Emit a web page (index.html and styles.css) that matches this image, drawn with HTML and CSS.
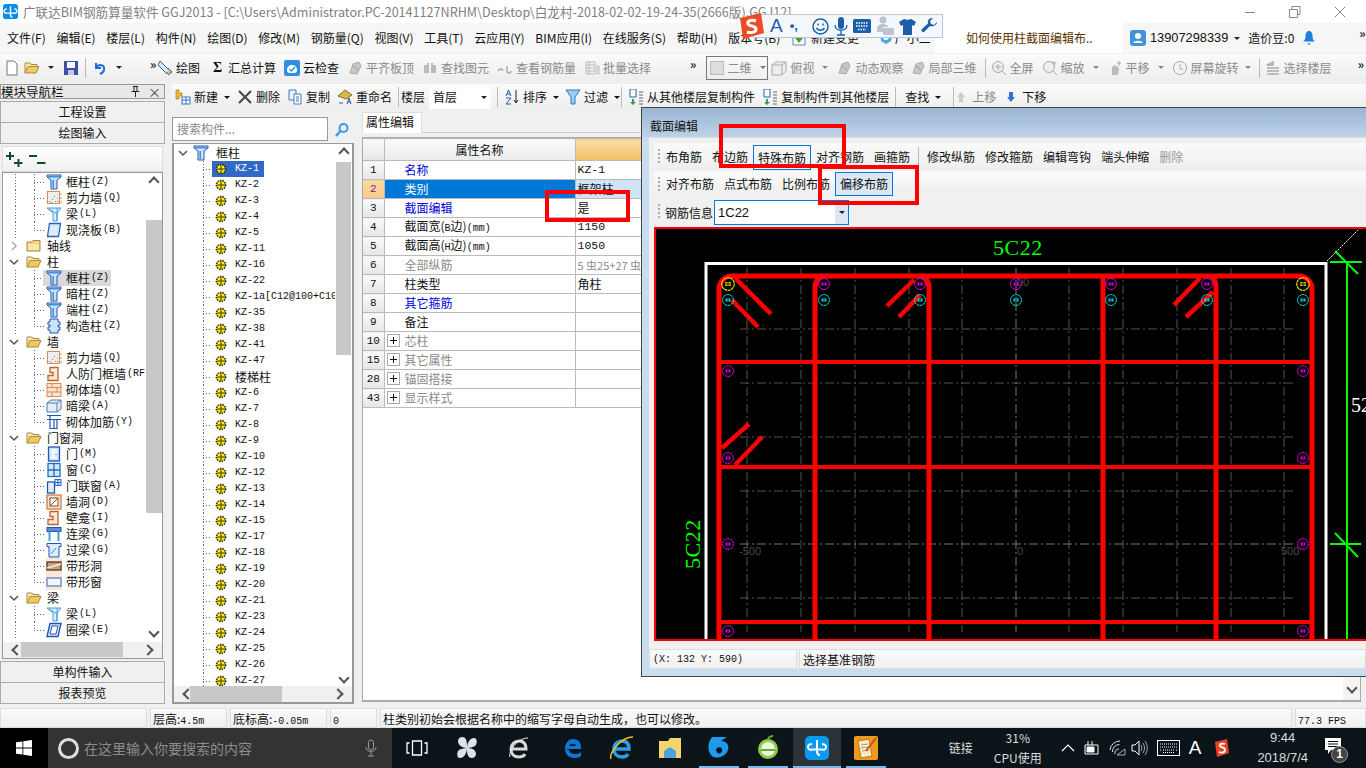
FILE: index.html
```html
<!DOCTYPE html>
<html lang="zh-CN">
<head>
    <meta charset="UTF-8">
    <title>广联达BIM钢筋算量软件 GGJ2013</title>
    <link rel="stylesheet" href="styles.css">
</head>
<body>
<svg class="defs" width="0" height="0">
    <symbol id="col" viewBox="0 0 16 16"><path d="M1 1h14v2l-4 3v9H5V6L1 3z" fill="#cfe3f8" stroke="#1f55b5"/><path d="M2 2h12v1.500H2zM6.500 6h1.500v8H6.500z" fill="#3f8fe0"/></symbol>
    <symbol id="wall" viewBox="0 0 16 16"><rect x="1.500" y="1.500" width="12" height="12" fill="#eee" stroke="#d98a50"/><path d="M3 11h1v1H3zM6 9h1v1H6zM9 11h1v1H9zM11 8h1v1h-1zM8 6h1v1H8zM5 12h1v1H5zM11 11h1v1h-1z" fill="#888"/><path d="M14 4h2M14 8h2M14 12h2" stroke="#d98a50"/></symbol>
    <symbol id="beam" viewBox="0 0 16 16"><path d="M1 2h14l-4 5v8H7V7z" fill="#d8ecfb" stroke="#4a9ae0"/><path d="M11 2v13M3 3l8 5" stroke="#4a9ae0" fill="none"/></symbol>
    <symbol id="slab" viewBox="0 0 16 16"><path d="M3.500 1.500h11l-2 13h-11z" fill="#dcecfb" stroke="#2b62b8" stroke-width="1.300"/></symbol>
    <symbol id="fold" viewBox="0 0 16 16"><path d="M1 4h5l1-1.500h7V13H1z" fill="#f3d67c" stroke="#a98a3c"/><path d="M2 6h11v6H2z" fill="#fbe9a8"/></symbol>
    <symbol id="open" viewBox="0 0 16 16"><path d="M1 13V3h5l1 1.500h6V7" fill="#f6e6b0" stroke="#a98a3c"/><path d="M1 13l3-6.500h11L12 13z" fill="#f2c95c" stroke="#a98a3c"/></symbol>
    <symbol id="gz" viewBox="0 0 16 16"><path d="M4 1h8v3h2v3h-2v2h2v3h-2v3H4v-3H2V9h2V7H2V4h2z" fill="#cfe3f8" stroke="#1f55b5"/></symbol>
    <symbol id="rf" viewBox="0 0 16 16"><path d="M4 1.500h8v13H2v-5h5v-3H4z" fill="#fbe8d6" stroke="#b8652e" stroke-width="1.300"/></symbol>
    <symbol id="brick" viewBox="0 0 16 16"><rect x="1" y="1.500" width="14" height="13" fill="#fbe3cf" stroke="#d98a50"/><path d="M1 5.500h14M1 10h14M6 1.500v4M11 5.500V10M6 10v4.500" stroke="#d98a50"/></symbol>
    <symbol id="ab" viewBox="0 0 16 16"><path d="M1 5l4-3h10v9l-4 3H1z" fill="#e3eef9" stroke="#4d7aa8"/><path d="M1 5h10v9M11 5l4-3" fill="none" stroke="#4d7aa8"/></symbol>
    <symbol id="rein" viewBox="0 0 16 16"><path d="M1 1.500h14M4 1.500v13h7V5M1 5.500h14M8 5.500v9" fill="none" stroke="#1f55b5" stroke-width="1.200"/></symbol>
    <symbol id="door" viewBox="0 0 16 16"><rect x="2.500" y="1" width="11" height="14" fill="#cfe3f8" stroke="#1f55b5" stroke-width="1.300"/><rect x="5" y="3" width="6" height="10" fill="#eef6fd"/><path d="M9.500 8h1v1h-1z" fill="#1f55b5"/></symbol>
    <symbol id="win" viewBox="0 0 16 16"><rect x="2" y="1.500" width="12" height="13" fill="#d5e8fa" stroke="#1f6ec5" stroke-width="1.300"/><path d="M8 1.500v13M2 8h12" stroke="#1f6ec5" stroke-width="1.300"/></symbol>
    <symbol id="dw" viewBox="0 0 16 16"><rect x="1.500" y="4" width="7" height="11" fill="#e3eef9" stroke="#1f55b5" stroke-width="1.300"/><rect x="9" y="1.500" width="6" height="6" fill="#d5e8fa" stroke="#1f6ec5"/><path d="M12 1.500v6M9 4.500h6" stroke="#1f6ec5"/></symbol>
    <symbol id="hole" viewBox="0 0 16 16"><rect x="1" y="1" width="14" height="14" fill="#fbe3cf" stroke="#c8733a" stroke-width="1.200"/><rect x="4" y="4" width="8" height="8" fill="#fff" stroke="#8a4a20"/><path d="M4 12l8-8" stroke="#8a4a20"/></symbol>
    <symbol id="lb" viewBox="0 0 16 16"><rect x="1" y="1.500" width="14" height="4" fill="#5a8fd8" stroke="#1f55b5"/><path d="M3.500 5.500V15M12.500 5.500V15" stroke="#4a9ae0" stroke-width="2"/></symbol>
    <symbol id="gl" viewBox="0 0 16 16"><path d="M1 1.500h14v3H13V15H3V4.500H1z" fill="#dcecfb" stroke="#1f55b5"/><path d="M5 12l5-6" stroke="#3f8fe0"/></symbol>
    <symbol id="dh" viewBox="0 0 16 16"><rect x="0" y="0" width="16" height="16" fill="#fbe6da"/><rect x="1" y="4" width="14" height="8" fill="#c7a080" stroke="#5e3313" stroke-width="1.300"/><path d="M1 10l14-4" stroke="#f5ece4" stroke-width="1.500"/></symbol>
    <symbol id="dc" viewBox="0 0 16 16"><rect x="0" y="0" width="16" height="16" fill="#fbe6da"/><rect x="1" y="4" width="14" height="8" fill="#eef5fc" stroke="#5e86c8" stroke-width="1.300"/></symbol>
    <symbol id="ql" viewBox="0 0 16 16"><path d="M4 1.500h11l-3 13H1z" fill="#dcecfb" stroke="#1f55b5" stroke-width="1.400"/><path d="M6 4h6l-2 8H4z" fill="#fff" stroke="#1f55b5"/></symbol>
    <symbol id="bar" viewBox="0 0 12 12"><circle cx="6" cy="6" r="4.600" fill="#ffee00" stroke="#222" stroke-width="1.500" stroke-dasharray="1.500 1"/><path d="M2 6h8M6 2v8" stroke="#333"/></symbol>
    <symbol id="dot" viewBox="0 0 18 18"><circle cx="9" cy="9" r="7.500" fill="none" stroke="currentColor" stroke-width="1.300" stroke-dasharray="3.500 .6"/><path d="M5.500 7h3v1.500h-3zM9.500 7h3v1.500h-3zM5.500 9.500h3V11h-3zM9.500 9.500h3V11h-3z" fill="currentColor"/></symbol>
    <symbol id="gray" viewBox="0 0 16 16"><path d="M3 13l3-9 6-2 2 4-4 8z" fill="#c8c8c8" stroke="#aaa"/><path d="M6 6l5 4" stroke="#999"/></symbol>
</svg>

<div class="titlebar">
    <svg class="logo" viewBox="0 0 16 16"><rect width="16" height="16" rx="3" fill="#0a8fe8"/><path d="M8 2.500v9M4 5.500a2.200 2.200 0 1 0 0 4.200h8a2.200 2.200 0 1 0 0-4.200M8 11.500c0 2 1 2.500 2 2.500" fill="none" stroke="#fff" stroke-width="1.500"/></svg>
    <span class="title-text">广联达BIM钢筋算量软件 GGJ2013 - [C:\Users\Administrator.PC-20141127NRHM\Desktop\白龙村-2018-02-02-19-24-35(2666版).GGJ12]</span>
    <div class="winbtns">
        <svg width="12" height="12"><path d="M1 6.500h10" stroke="#888"/></svg>
        <svg width="12" height="12"><path d="M.5 3.500h8v8h-8zM3 3.500V.5h8v8H8.500" fill="none" stroke="#888"/></svg>
        <svg width="12" height="12"><path d="M1 1l10 10M11 1L1 11" stroke="#888"/></svg>
    </div>
</div>

<div class="menubar">
    <span>文件(F)</span><span>编辑(E)</span><span>楼层(L)</span><span>构件(N)</span><span>绘图(D)</span><span>修改(M)</span><span>钢筋量(Q)</span><span>视图(V)</span><span>工具(T)</span><span>云应用(Y)</span><span>BIM应用(I)</span><span>在线服务(S)</span><span>帮助(H)</span><span class="m-ver">版本号(B)</span>
    <div class="m-link"><svg class="ic" viewBox="0 0 16 16"><path d="M2 1h9l3 3v11H2z" fill="#fff" stroke="#5a8ac0"/><path d="M8 4l4 4-4 5-4-5z" fill="#4aa02c"/></svg><span>新建变更</span></div>
    <div class="m-link"><svg class="ic" viewBox="0 0 16 16"><path d="M2 3h12l-1 8-5 3-5-3z" fill="#4aa8e8"/><circle cx="8" cy="7" r="3" fill="#fff"/></svg><span>广小二</span></div>
    <div class="m-ask">如何使用柱截面编辑布..</div>
    <div class="m-user">
        <svg class="ic" viewBox="0 0 16 16"><rect width="16" height="16" rx="3" fill="#3f93d8"/><circle cx="8" cy="6" r="3" fill="#fff"/><path d="M3 13c1-3 9-3 10 0z" fill="#fff"/></svg>
        <span class="u-phone">13907298339</span>
        <span class="arrow"></span>
        <span class="u-bean">造价豆:0</span>
        <svg class="u-bell" viewBox="0 0 16 18"><path d="M8 1c3 0 4 3 4 6 0 3 1 5 3 6H1c2-1 3-3 3-6 0-3 1-6 4-6z" fill="#1d7fe0"/><path d="M6 15h4l-2 2z" fill="#1d7fe0"/></svg>
        <span class="chev">»</span>
    </div>
</div>

<div class="toolbar">
    <div class="tb-left">
        <svg class="ic" viewBox="0 0 16 16"><path d="M3 1h7l3 3v11H3z" fill="#fff" stroke="#777"/></svg>
        <svg class="ic" viewBox="0 0 16 16"><use href="#open"/></svg><span class="arrow"></span>
        <svg class="ic" viewBox="0 0 16 16"><rect x="1" y="1" width="14" height="14" fill="#3d4fa8"/><rect x="4" y="2" width="8" height="6" fill="#fff"/><rect x="5" y="10" width="6" height="5" fill="#c8c8d8"/></svg>
        <i class="sep"></i>
        <svg class="ic" viewBox="0 0 16 16"><path d="M4 3v5h5" fill="none" stroke="#1e6fd0" stroke-width="2"/><path d="M4 8c3-5 9-3 8 2-.3 2-2 3-4 4" fill="none" stroke="#1e6fd0" stroke-width="2"/></svg><span class="arrow"></span>
        <span class="chev">»</span>
    </div>
    <div class="tool t-first"><svg class="ic" viewBox="0 0 16 16"><path d="M3 1l9 9-2 4-9-9z" fill="#d9e6f5" stroke="#2d5fa8"/><path d="M11 8l4 4-4 3" fill="#f0c040" stroke="#2d5fa8"/></svg>绘图</div>
    <div class="tool t-sum"><span class="sigma">Σ</span>汇总计算</div>
    <div class="tool"><svg class="ic" viewBox="0 0 16 16"><rect width="16" height="16" rx="2" fill="#2f8ee0"/><path d="M3 10c0-3 2-5 5-5s5 2 5 5-2 3-5 3-5 0-5-3z" fill="#fff"/><path d="M5.500 9l2 2 3.500-4" fill="none" stroke="#2f8ee0" stroke-width="1.300"/></svg>云检查</div>
    <div class="tool off"><svg class="ic"><use href="#gray"/></svg>平齐板顶</div>
    <div class="tool off"><svg class="ic" viewBox="0 0 16 16"><path d="M2 5h5v8H2zM9 5h5v8H9zM5 3h2v2H5zM9 3h2v2H9z" fill="#bbb"/></svg>查找图元</div>
    <div class="tool off"><svg class="ic" viewBox="0 0 16 16"><path d="M1 11c2-3 4-3 5 0M10 6v5a2 2 0 0 0 4 0" fill="none" stroke="#aaa" stroke-width="1.500"/></svg>查看钢筋量</div>
    <div class="tool off"><svg class="ic" viewBox="0 0 16 16"><path d="M2 2h9v12H2zM2 5h9M2 8h9M2 11h9M5 2v12M13 6h2v8h-2z" fill="none" stroke="#bbb"/></svg>批量选择</div>
    <span class="chev c-mid">»</span>
    <div class="combo2"><span class="sq"></span>二维<span class="arrow"></span></div>
    <div class="tool off t-view"><svg class="ic" viewBox="0 0 16 16"><path d="M1 5l4-3h10v9l-4 4H1z" fill="#eee" stroke="#aaa"/><path d="M1 5h10v10M11 5l4-3" fill="none" stroke="#aaa"/></svg>俯视<span class="arrow a-gap"></span></div>
    <div class="tool off"><svg class="ic"><use href="#gray"/></svg>动态观察</div>
    <div class="tool off t-tight"><svg class="ic"><use href="#gray"/></svg>局部三维</div>
    <i class="sep s-tall"></i>
    <div class="tool off"><svg class="ic" viewBox="0 0 16 16"><circle cx="7" cy="7" r="5.500" fill="#eee" stroke="#aaa"/><path d="M4 7h6M7 4v6M11 11l4 4" stroke="#aaa"/></svg>全屏</div>
    <div class="tool off"><svg class="ic" viewBox="0 0 16 16"><circle cx="7" cy="7" r="5.500" fill="#eee" stroke="#aaa"/><path d="M11 11l4 4M12 1v4M14 3h-4" stroke="#aaa"/></svg>缩放<span class="arrow a-gap"></span></div>
    <div class="tool off"><svg class="ic" viewBox="0 0 16 16"><path d="M5 15V7l3-2 4 3-1 7z" fill="#bbb"/><path d="M12 1v5M10 3h4" stroke="#aaa"/></svg>平移<span class="arrow a-gap"></span></div>
    <div class="tool off"><svg class="ic" viewBox="0 0 16 16"><circle cx="8" cy="8" r="6.500" fill="#f4f4f4" stroke="#aaa"/><path d="M8 4v5h3" fill="none" stroke="#aaa"/></svg>屏幕旋转<span class="arrow"></span></div>
    <i class="sep s-tall"></i>
    <div class="tool off"><svg class="ic" viewBox="0 0 16 16"><path d="M2 5l6-3v3zM2 8h12M2 11h12M2 14h12" fill="none" stroke="#aaa" stroke-width="1.400"/></svg>选择楼层</div>
    <span class="chev c-end">»</span>
</div>

<div class="main">
    <!-- 模块导航栏 -->
    <div class="nav">
        <div class="nav-head"><span>模块导航栏</span><svg class="nav-pin" width="9" height="11" viewBox="0 0 9 11"><path d="M2 .5h5M3 .5v5M6 .5v5M.5 5.500h8M4.500 6v5" fill="none" stroke="#222"/></svg><span class="nav-x">×</span></div>
        <div class="nav-btn nb-first">工程设置</div>
        <div class="nav-btn">绘图输入</div>
        <div class="nav-tool">
            <svg width="17" height="15" viewBox="0 0 17 15"><path d="M0 4h8M4 0v8M8 11h8.500M12.500 7v8" stroke="#114d24" stroke-width="2"/></svg>
            <svg width="17" height="15" viewBox="0 0 17 15"><path d="M0 4h8M8 11h8.500" stroke="#114d24" stroke-width="2"/></svg>
        </div>
        <div class="nav-tree">
            <div class="nav-list">
                <div class="row kid"><div class="item"><svg class="ic"><use href="#col"/></svg>框柱<span class="lat">(Z)</span></div></div>
                <div class="row kid"><div class="item"><svg class="ic"><use href="#wall"/></svg>剪力墙<span class="lat">(Q)</span></div></div>
                <div class="row kid"><div class="item"><svg class="ic"><use href="#beam"/></svg>梁<span class="lat">(L)</span></div></div>
                <div class="row kid last"><div class="item"><svg class="ic"><use href="#slab"/></svg>现浇板<span class="lat">(B)</span></div></div>
                <div class="row group"><svg class="gt" viewBox="0 0 10 10"><path d="M3 1l4 4-4 4" fill="none" stroke="#aaa" stroke-width="1.500"/></svg><svg class="ic"><use href="#fold"/></svg>轴线</div>
                <div class="row group"><svg class="gt" viewBox="0 0 10 10"><path d="M1 3l4 4 4-4" fill="none" stroke="#555" stroke-width="1.500"/></svg><svg class="ic"><use href="#open"/></svg>柱</div>
                <div class="row kid"><div class="item picked"><svg class="ic"><use href="#col"/></svg>框柱<span class="lat">(Z)</span></div></div>
                <div class="row kid"><div class="item"><svg class="ic"><use href="#col"/></svg>暗柱<span class="lat">(Z)</span></div></div>
                <div class="row kid"><div class="item"><svg class="ic"><use href="#col"/></svg>端柱<span class="lat">(Z)</span></div></div>
                <div class="row kid last"><div class="item"><svg class="ic"><use href="#gz"/></svg>构造柱<span class="lat">(Z)</span></div></div>
                <div class="row group"><svg class="gt" viewBox="0 0 10 10"><path d="M1 3l4 4 4-4" fill="none" stroke="#555" stroke-width="1.500"/></svg><svg class="ic"><use href="#open"/></svg>墙</div>
                <div class="row kid"><div class="item"><svg class="ic"><use href="#wall"/></svg>剪力墙<span class="lat">(Q)</span></div></div>
                <div class="row kid"><div class="item"><svg class="ic"><use href="#rf"/></svg>人防门框墙<span class="lat">(RF</span></div></div>
                <div class="row kid"><div class="item"><svg class="ic"><use href="#brick"/></svg>砌体墙<span class="lat">(Q)</span></div></div>
                <div class="row kid"><div class="item"><svg class="ic"><use href="#ab"/></svg>暗梁<span class="lat">(A)</span></div></div>
                <div class="row kid last"><div class="item"><svg class="ic"><use href="#rein"/></svg>砌体加筋<span class="lat">(Y)</span></div></div>
                <div class="row group"><svg class="gt" viewBox="0 0 10 10"><path d="M1 3l4 4 4-4" fill="none" stroke="#555" stroke-width="1.500"/></svg><svg class="ic"><use href="#open"/></svg>门窗洞</div>
                <div class="row kid"><div class="item"><svg class="ic"><use href="#door"/></svg>门<span class="lat">(M)</span></div></div>
                <div class="row kid"><div class="item"><svg class="ic"><use href="#win"/></svg>窗<span class="lat">(C)</span></div></div>
                <div class="row kid"><div class="item"><svg class="ic"><use href="#dw"/></svg>门联窗<span class="lat">(A)</span></div></div>
                <div class="row kid"><div class="item"><svg class="ic"><use href="#hole"/></svg>墙洞<span class="lat">(D)</span></div></div>
                <div class="row kid"><div class="item"><svg class="ic"><use href="#rf"/></svg>壁龛<span class="lat">(I)</span></div></div>
                <div class="row kid"><div class="item"><svg class="ic"><use href="#lb"/></svg>连梁<span class="lat">(G)</span></div></div>
                <div class="row kid"><div class="item"><svg class="ic"><use href="#gl"/></svg>过梁<span class="lat">(G)</span></div></div>
                <div class="row kid"><div class="item"><svg class="ic"><use href="#dh"/></svg>带形洞</div></div>
                <div class="row kid last"><div class="item"><svg class="ic"><use href="#dc"/></svg>带形窗</div></div>
                <div class="row group"><svg class="gt" viewBox="0 0 10 10"><path d="M1 3l4 4 4-4" fill="none" stroke="#555" stroke-width="1.500"/></svg><svg class="ic"><use href="#open"/></svg>梁</div>
                <div class="row kid"><div class="item"><svg class="ic"><use href="#beam"/></svg>梁<span class="lat">(L)</span></div></div>
                <div class="row kid last"><div class="item"><svg class="ic"><use href="#ql"/></svg>圈梁<span class="lat">(E)</span></div></div>
            </div>
            <div class="vbar nav-v"><span class="up"></span><span class="thumb"></span><span class="down"></span></div>
            <div class="hbar nav-h"><span class="left"></span><span class="thumb"></span><span class="right"></span></div>
        </div>
        <div class="nav-btn nb-low">单构件输入</div>
        <div class="nav-btn">报表预览</div>
    </div>

    <div class="work">
        <div class="toolbar3">
            <div class="tool"><svg class="ic" viewBox="0 0 16 16"><path d="M1 1h3v3h3v3H4v3H1z" fill="#e8c030" stroke="#8a7010" stroke-width=".6"/><rect x="7" y="8" width="8" height="7" fill="#fff" stroke="#3a70c0"/><path d="M7 11h8M11 8v7" stroke="#3a70c0"/></svg>新建<span class="arrow"></span></div>
            <div class="tool"><svg class="ic" viewBox="0 0 16 16"><path d="M2 2l12 12M14 2L2 14" stroke="#444" stroke-width="2"/></svg>删除</div>
            <div class="tool"><svg class="ic" viewBox="0 0 16 16"><path d="M2 1h7v10H2z" fill="#eaf2fb" stroke="#4878b8"/><path d="M7 5h7v10H7z" fill="#fff" stroke="#4878b8"/><path d="M9 8h3M9 10h3M9 12h3" stroke="#4878b8"/></svg>复制</div>
            <div class="tool"><svg class="ic" viewBox="0 0 16 16"><path d="M8 1l7 5-6 4-8-3z" fill="#d9b848" stroke="#85701c"/><path d="M2 14h4M10 15l2-6 2 6M11 13h2" stroke="#2f55a8" fill="none"/></svg>重命名</div>
            <i class="sep"></i>
            <span class="floor">楼层</span>
            <div class="floor-box">首层<span class="arrow"></span></div>
            <i class="sep"></i>
            <div class="tool t-sort"><svg class="ic" viewBox="0 0 16 16"><path d="M2 7l2.500-6L7 7M3 5h3M2 9h5l-5 6h5" fill="none" stroke="#2f55a8"/><path d="M12 1v13M10 11l2 3 2-3" fill="none" stroke="#222"/></svg>排序<span class="arrow"></span></div>
            <div class="tool t-filter"><svg class="ic" viewBox="0 0 16 16"><path d="M1 1h14L10 8v7H6V8z" fill="#9ecbf0" stroke="#2a78c8"/></svg>过滤<span class="arrow"></span></div>
            <i class="sep s-copy"></i>
            <div class="tool"><svg class="ic" viewBox="0 0 16 16"><path d="M2 0h6v8H2z" fill="#fff" stroke="#2a5fb0"/><path d="M4 10h2v3h2l-3 3-3-3h2z" fill="#39a04a"/><path d="M11 3h4M11 6h4M11 9h4M11 12h4M11 15h4" stroke="#666"/></svg>从其他楼层复制构件</div>
            <div class="tool"><svg class="ic" viewBox="0 0 16 16"><path d="M2 0h6v8H2z" fill="#fff" stroke="#2a5fb0"/><path d="M4 10h2v3h2l-3 3-3-3h2z" fill="#39a04a"/><path d="M11 3h4M11 6h4M11 9h4M11 12h4M11 15h4" stroke="#666"/></svg>复制构件到其他楼层</div>
            <i class="sep"></i>
            <div class="tool t-plain">查找<span class="arrow"></span></div>
            <i class="sep"></i>
            <div class="tool off t-up"><svg class="ic" viewBox="0 0 16 16"><path d="M8 3l4 5H10v5H6V8H4z" fill="#ccc"/></svg>上移</div>
            <div class="tool"><svg class="ic" viewBox="0 0 16 16"><path d="M8 13l4-5H10V3H6v5H4z" fill="#3a70d0"/></svg>下移</div>
        </div>

        <div class="panes">
            <div class="comp">
                <div class="comp-search">
                    <div class="search-input">搜索构件...</div>
                    <svg class="search-btn" viewBox="0 0 16 16"><circle cx="9.500" cy="6" r="4" fill="none" stroke="#3a9ae8" stroke-width="2"/><path d="M6.500 9L2 14" stroke="#3a9ae8" stroke-width="2.500"/></svg>
                </div>
                <div class="comp-frame">
                    <div class="comp-list">
                        <div class="k-root"><svg class="gt" viewBox="0 0 10 10"><path d="M1 3l4 4 4-4" fill="none" stroke="#555" stroke-width="1.500"/></svg><svg class="ic"><use href="#col"/></svg>框柱</div>
                        <div class="k selected"><div class="k-in"><svg class="ib"><use href="#bar"/></svg>KZ-1</div></div>
                        <div class="k"><div class="k-in"><svg class="ib"><use href="#bar"/></svg>KZ-2</div></div>
                        <div class="k"><div class="k-in"><svg class="ib"><use href="#bar"/></svg>KZ-3</div></div>
                        <div class="k"><div class="k-in"><svg class="ib"><use href="#bar"/></svg>KZ-4</div></div>
                        <div class="k"><div class="k-in"><svg class="ib"><use href="#bar"/></svg>KZ-5</div></div>
                        <div class="k"><div class="k-in"><svg class="ib"><use href="#bar"/></svg>KZ-11</div></div>
                        <div class="k"><div class="k-in"><svg class="ib"><use href="#bar"/></svg>KZ-16</div></div>
                        <div class="k"><div class="k-in"><svg class="ib"><use href="#bar"/></svg>KZ-22</div></div>
                        <div class="k"><div class="k-in"><svg class="ib"><use href="#bar"/></svg>KZ-1a[C12@100+C10</div></div>
                        <div class="k"><div class="k-in"><svg class="ib"><use href="#bar"/></svg>KZ-35</div></div>
                        <div class="k"><div class="k-in"><svg class="ib"><use href="#bar"/></svg>KZ-38</div></div>
                        <div class="k"><div class="k-in"><svg class="ib"><use href="#bar"/></svg>KZ-41</div></div>
                        <div class="k"><div class="k-in"><svg class="ib"><use href="#bar"/></svg>KZ-47</div></div>
                        <div class="k"><div class="k-in"><svg class="ib"><use href="#bar"/></svg><span class="cjk">楼梯柱</span></div></div>
                        <div class="k"><div class="k-in"><svg class="ib"><use href="#bar"/></svg>KZ-6</div></div>
                        <div class="k"><div class="k-in"><svg class="ib"><use href="#bar"/></svg>KZ-7</div></div>
                        <div class="k"><div class="k-in"><svg class="ib"><use href="#bar"/></svg>KZ-8</div></div>
                        <div class="k"><div class="k-in"><svg class="ib"><use href="#bar"/></svg>KZ-9</div></div>
                        <div class="k"><div class="k-in"><svg class="ib"><use href="#bar"/></svg>KZ-10</div></div>
                        <div class="k"><div class="k-in"><svg class="ib"><use href="#bar"/></svg>KZ-12</div></div>
                        <div class="k"><div class="k-in"><svg class="ib"><use href="#bar"/></svg>KZ-13</div></div>
                        <div class="k"><div class="k-in"><svg class="ib"><use href="#bar"/></svg>KZ-14</div></div>
                        <div class="k"><div class="k-in"><svg class="ib"><use href="#bar"/></svg>KZ-15</div></div>
                        <div class="k"><div class="k-in"><svg class="ib"><use href="#bar"/></svg>KZ-17</div></div>
                        <div class="k"><div class="k-in"><svg class="ib"><use href="#bar"/></svg>KZ-18</div></div>
                        <div class="k"><div class="k-in"><svg class="ib"><use href="#bar"/></svg>KZ-19</div></div>
                        <div class="k"><div class="k-in"><svg class="ib"><use href="#bar"/></svg>KZ-20</div></div>
                        <div class="k"><div class="k-in"><svg class="ib"><use href="#bar"/></svg>KZ-21</div></div>
                        <div class="k"><div class="k-in"><svg class="ib"><use href="#bar"/></svg>KZ-23</div></div>
                        <div class="k"><div class="k-in"><svg class="ib"><use href="#bar"/></svg>KZ-24</div></div>
                        <div class="k"><div class="k-in"><svg class="ib"><use href="#bar"/></svg>KZ-25</div></div>
                        <div class="k"><div class="k-in"><svg class="ib"><use href="#bar"/></svg>KZ-26</div></div>
                        <div class="k"><div class="k-in"><svg class="ib"><use href="#bar"/></svg>KZ-27</div></div>
                    </div>
                    <div class="vbar comp-v"><span class="up"></span><span class="thumb"></span><span class="down"></span></div>
                    <div class="hbar comp-h"><span class="left"></span><span class="thumb"></span><span class="right"></span></div>
                </div>
            </div>

            <div class="props">
                <div class="prop-tabs"><div class="prop-tab">属性编辑</div></div>
                <div class="prop-body">
                    <table class="grid">
                        <tr class="g-head"><th class="n"></th><th class="name">属性名称</th><th class="val"></th></tr>
                        <tr><td class="n">1</td><td class="name blue">名称</td><td class="val lat-v">KZ-1</td></tr>
                        <tr class="on"><td class="n">2</td><td class="name">类别</td><td class="val">框架柱</td></tr>
                        <tr><td class="n">3</td><td class="name blue">截面编辑</td><td class="val">是</td></tr>
                        <tr><td class="n">4</td><td class="name">截面宽(<span class="lat">B</span>边)<span class="lat">(mm)</span></td><td class="val lat-v">1150</td></tr>
                        <tr><td class="n">5</td><td class="name">截面高(<span class="lat">H</span>边)<span class="lat">(mm)</span></td><td class="val lat-v">1050</td></tr>
                        <tr><td class="n">6</td><td class="name dim">全部纵筋</td><td class="val dim small">5 虫25+27 虫22</td></tr>
                        <tr><td class="n">7</td><td class="name">柱类型</td><td class="val">角柱</td></tr>
                        <tr><td class="n">8</td><td class="name blue">其它箍筋</td><td class="val"></td></tr>
                        <tr><td class="n">9</td><td class="name">备注</td><td class="val"></td></tr>
                        <tr><td class="n">10</td><td class="name dim"><span class="plus"></span>芯柱</td><td class="val"></td></tr>
                        <tr><td class="n">15</td><td class="name dim"><span class="plus"></span>其它属性</td><td class="val"></td></tr>
                        <tr><td class="n">28</td><td class="name dim"><span class="plus"></span>锚固搭接</td><td class="val"></td></tr>
                        <tr><td class="n">43</td><td class="name dim"><span class="plus"></span>显示样式</td><td class="val"></td></tr>
                    </table>
                    <div class="prop-scroll"><span class="down"></span></div>
                </div>
            </div>
        </div>
    </div>
</div>

<div class="statusbar">
    <div class="s-cell s1"></div>
    <div class="s-cell s2">层高:<span class="lat">4.5m</span></div>
    <div class="s-cell s3">底标高:<span class="lat">-0.05m</span></div>
    <div class="s-cell s4"><span class="lat">0</span></div>
    <div class="s-cell s5">柱类别初始会根据名称中的缩写字母自动生成，也可以修改。</div>
    <div class="s-cell s6"><span class="lat">77.3 FPS</span></div>
</div>

<div class="taskbar">
    <div class="start"><svg width="16" height="16" viewBox="0 0 16 16"><path d="M0 2.300l6.500-.9v6.200H0zM7.300 1.300L16 0v7.600H7.300zM0 8.400h6.500v6.200L0 13.700zM7.300 8.400H16V16l-8.700-1.200z" fill="#fff"/></svg></div>
    <div class="search">
        <span class="ring"></span>
        <span class="s-hint">在这里输入你要搜索的内容</span>
        <svg class="mic" width="12" height="18" viewBox="0 0 12 18"><rect x="3.500" y="1" width="5" height="10" rx="2.500" fill="none" stroke="#999"/><path d="M1 8c0 6 10 6 10 0M6 13v4M3 17h6" fill="none" stroke="#999"/></svg>
    </div>
    <div class="apps">
        <div class="app"><svg width="22" height="16" viewBox="0 0 22 16"><path d="M6.500 1h9v14h-9zM3.500 3H1v10h2.500M18.500 3H21v10h-2.500" fill="none" stroke="#fff" stroke-width="1.300"/></svg></div>
        <div class="app"><svg width="22" height="24" viewBox="0 0 22 24"><path d="M11 12C6 12 2 9 2 5s5-5 7-3 2 6 2 10zM11 12c0-5 3-10 7-10s3 7 1 8-5 2-8 2zM11 12c5 0 9 2 9 6s-5 5-7 3-2-5-2-9zM11 12c0 5-3 10-7 10s-3-7-1-8 5-2 8-2z" fill="#dfe3e6"/></svg></div>
        <div class="app a-ie"><svg width="24" height="26" viewBox="0 0 24 26"><path d="M5 14h14c0-6-3-8-7-8s-8 3-8 8 3 8 8 8c3 0 5-1 6-3" fill="none" stroke="#d8d8d8" stroke-width="3"/><path d="M3 22C1 17 10 3 21 3" fill="none" stroke="#eee"/></svg></div>
        <div class="app a-edge"><svg width="22" height="24" viewBox="0 0 22 24"><path d="M3 13h15c1-6-3-10-8-10S2 8 2 13s4 9 9 9c4 0 6-1 7-2v-4c-2 2-4 2-6 2-3 0-5-1-6-4z M6 10c1-3 7-3 7 0z" fill="#0a78d7" fill-rule="evenodd"/></svg></div>
        <div class="app a-ie2"><svg width="26" height="26" viewBox="0 0 26 26"><path d="M6 14h14c0-6-3-8-7-8s-8 3-8 8 3 8 8 8c3 0 5-1 6-3" fill="none" stroke="#2a9fe8" stroke-width="3.500"/><path d="M2 24C0 18 12 2 24 2" fill="none" stroke="#f0c020" stroke-width="1.500"/></svg></div>
        <div class="app a-folder"><svg width="24" height="22" viewBox="0 0 24 22"><path d="M1 4h9l2-3h11v20H1z" fill="#f7d46c"/><path d="M6 21v-7l6-4 6 4v7z" fill="#4aa3e0"/></svg></div>
        <div class="app on-line a-glodon"><svg width="24" height="26" viewBox="0 0 24 26"><path d="M5 2h15l-6 4c7 0 9 6 6 11s-12 8-16 3S1 7 5 2z" fill="#1e9aea"/><path d="M9 14c3-3 7-2 6 2s-6 3-6-2z" fill="#0b1116"/></svg></div>
        <div class="app on-line a-green"><svg width="24" height="26" viewBox="0 0 24 26"><circle cx="12" cy="14" r="10" fill="#8ecb4a"/><circle cx="12" cy="14" r="7" fill="#eef8e0"/><path d="M5 15h14" stroke="#6aa82e" stroke-width="2"/><path d="M12 4c1-2 3-3 5-3" fill="none" stroke="#6aa82e" stroke-width="2"/></svg></div>
        <div class="app on-line active"><svg width="24" height="26" viewBox="0 0 24 26"><rect y="1" width="24" height="24" rx="5" fill="#0a9af0"/><path d="M12 5v11M7 9.500a2.800 2.800 0 1 0 0 5h10a2.800 2.800 0 1 0 0-5M12 16c0 3 1 4 3 4" fill="none" stroke="#fff" stroke-width="2"/></svg></div>
        <div class="app on-line a-note"><svg width="26" height="26" viewBox="0 0 26 26"><rect x="1" y="1" width="24" height="24" rx="2" fill="#f09a1c"/><path d="M5 6l11-2 3 17-11 2z" fill="#f6edc8" stroke="#b87a20"/><path d="M8 10l7-1M8 13l7-1M9 16l7-1" stroke="#b09a60"/><path d="M23 3L13 16" stroke="#c8501a" stroke-width="2"/></svg></div>
    </div>
    <div class="tray">
        <span class="t-link">链接</span>
        <div class="t-cpu"><span>31%</span><span>CPU使用</span></div>
        <svg width="14" height="8" viewBox="0 0 14 8"><path d="M1 7l6-6 6 6" fill="none" stroke="#fff" stroke-width="1.200"/></svg>
        <svg width="16" height="14" viewBox="0 0 16 14"><path d="M1 4h13v9H1z" fill="none" stroke="#fff"/><path d="M3 6h7v5H3zM4 0v4M8 0v4" fill="#fff" stroke="#fff"/></svg>
        <svg class="t-wifi" width="17" height="16" viewBox="0 0 17 16"><path d="M1 10a10 10 0 0 1 10-9M3.500 12a7 7 0 0 1 7-7.500M6 14a4 4 0 0 1 4-5" fill="none" stroke="#ddd"/><path d="M8 15h8V9z" fill="none" stroke="#aaa"/></svg>
        <svg width="17" height="16" viewBox="0 0 17 16"><path d="M1 5h3l4-4v14l-4-4H1z" fill="none" stroke="#fff"/><path d="M10 5c1 2 1 4 0 6M12 3c2 3 2 7 0 10M14 1c3 4 3 10 0 14" fill="none" stroke="#aaa"/></svg>
        <svg width="23" height="16" viewBox="0 0 23 16"><rect x=".5" y=".5" width="22" height="15" fill="none" stroke="#fff"/><path d="M3 4h17M3 7h17M3 10h1M6 10h11M19 10h1M6 12.500h11" stroke="#fff" stroke-dasharray="1 1"/></svg>
        <span class="t-a">A</span>
        <svg width="17" height="20" viewBox="0 0 17 20"><path d="M2 4l12-3 2 14-12 4z" fill="#e8452a"/><path d="M12 6c-3-1-6 0-5 2s5 1 5 4-4 3-6 2" fill="none" stroke="#fff" stroke-width="1.800"/></svg>
        <div class="t-clock"><span>9:44</span><span>2018/7/4</span></div>
        <div class="t-note"><svg width="16" height="16" viewBox="0 0 16 16"><path d="M0 0h16v12H6l-3 4v-4H0z" fill="#fff"/><path d="M3 3.500h10M3 6h10M3 8.500h10" stroke="#111"/></svg><span class="badge">1</span></div>
    </div>
</div>

<!-- 截面编辑 dialog floats over the main window -->
<div class="dialog">
    <div class="dlg-title">截面编辑</div>
    <div class="dlg-body">
        <div class="dlg-bar b1">
            <span class="grip"></span>
            <span>布角筋</span><span>布边筋</span><span class="pressed p1">特殊布筋</span><span>对齐钢筋</span><span>画箍筋</span><i class="sep"></i><span>修改纵筋</span><span>修改箍筋</span><span>编辑弯钩</span><span>端头伸缩</span><span class="gray">删除</span>
        </div>
        <div class="dlg-bar b2">
            <span class="grip"></span>
            <span>对齐布筋</span><span>点式布筋</span><span>比例布筋</span><span class="pressed p2">偏移布筋</span>
        </div>
        <div class="dlg-bar b3">
            <span class="grip"></span>
            <span>钢筋信息</span>
            <div class="dlg-combo"><span>1C22</span><em><span class="arrow"></span></em></div>
        </div>
        <div class="canvas">
            <svg width="710" height="410" viewBox="656 229 710 410">
                <path d="M706 640V263.500H1326V640" fill="none" stroke="#fff" stroke-width="3"/>
                <g fill="none" stroke="#555" stroke-dasharray="9 3 2 3">
                    <path d="M740 329H1294M740 383H1294M740 437H1294M740 491H1294M740 598H1294"/>
                    <path d="M747 268V632M801 268V632M855 268V632M909 268V632M962 268V632M1069 268V632M1123 268V632M1177 268V632M1231 268V632M1284 268V632"/>
                </g>
                <g fill="none" stroke="#777" stroke-dasharray="9 3 2 3">
                    <path d="M740 544H1294M1016 268V632"/>
                </g>
                <g font-family="Liberation Sans, sans-serif" font-size="11" fill="#4a4a4a">
                    <text x="739" y="555">-500</text><text x="1017" y="555">0</text><text x="1281" y="555">500</text><text x="1017" y="286">00</text>
                </g>
                <g fill="none" stroke="#f00" stroke-width="5">
                    <path d="M719 640V289a13 13 0 0 1 13-13H1299a13 13 0 0 1 13 13V640"/>
                    <path d="M815 640V288q0-10 8-12M929 640V288q0-10-8-12M1103 640V276M1216 640V288q0-10-6-12"/>
                    <path d="M719 362H1312M719 467H1312M719 622H1312" stroke-width="4"/>
                    <path d="M735 278L771 314M732 300L758 327M914 280L887 306M920 295L899 317M1200 278L1174 305M1213 292L1186 317M722 448L749 424M735 465L762 437" stroke-width="4.500"/>
                </g>
                <g>
                    <use href="#dot" x="720.500" y="276.500" width="15" height="15" color="#ff0"/>
                    <use href="#dot" x="1295.500" y="276.500" width="15" height="15" color="#ff0"/>
                    <g color="#f0f">
                        <use href="#dot" x="817.500" y="277.500" width="13" height="13"/>
                        <use href="#dot" x="913.500" y="277.500" width="13" height="13"/>
                        <use href="#dot" x="1009.500" y="277.500" width="13" height="13"/>
                        <use href="#dot" x="1104.500" y="277.500" width="13" height="13"/>
                        <use href="#dot" x="1200.500" y="277.500" width="13" height="13"/>
                        <use href="#dot" x="721.500" y="364.500" width="13" height="13"/>
                        <use href="#dot" x="1296.500" y="364.500" width="13" height="13"/>
                        <use href="#dot" x="721.500" y="451.500" width="13" height="13"/>
                        <use href="#dot" x="1296.500" y="451.500" width="13" height="13"/>
                        <use href="#dot" x="721.500" y="537.500" width="13" height="13"/>
                        <use href="#dot" x="1296.500" y="537.500" width="13" height="13"/>
                        <use href="#dot" x="721.500" y="624.500" width="13" height="13"/>
                        <use href="#dot" x="1296.500" y="624.500" width="13" height="13"/>
                    </g>
                    <g color="#0ff">
                        <use href="#dot" x="721.500" y="293.500" width="13" height="13"/>
                        <use href="#dot" x="817.500" y="293.500" width="13" height="13"/>
                        <use href="#dot" x="913.500" y="293.500" width="13" height="13"/>
                        <use href="#dot" x="1009.500" y="293.500" width="13" height="13"/>
                        <use href="#dot" x="1104.500" y="293.500" width="13" height="13"/>
                        <use href="#dot" x="1200.500" y="293.500" width="13" height="13"/>
                        <use href="#dot" x="1296.500" y="293.500" width="13" height="13"/>
                    </g>
                </g>
                <g fill="none" stroke="#0f0" stroke-width="2">
                    <path d="M1347 262V640"/>
                    <path d="M1330 262H1362M1335 251L1358 274M1330 544H1361M1335 533L1358 557"/>
                </g>
                <path d="M1327 261L1359 229" stroke="#fff" stroke-dasharray="2 1"/>
                <text x="1351" y="412" class="dim-w">52</text>
                <text x="993" y="255" class="dim-g">5C22</text>
                <text x="700" y="569" class="dim-g" transform="rotate(-90 700 569)">5C22</text>
            </svg>
        </div>
        <div class="dlg-status">
            <div class="ds1">(X: 132 Y: 590)</div>
            <div class="ds2">选择基准钢筋</div>
        </div>
    </div>
</div>

<!-- 搜狗 IME bar -->
<div class="ime">
    <svg class="ime-s" viewBox="0 0 28 28"><path d="M3 6l21-5 3 20-21 6z" fill="#ef4a23"/><path d="M19 9c-5-2-9 0-8 3s8 1 8 5-6 4-9 3" fill="none" stroke="#fff" stroke-width="3"/></svg>
    <span class="ime-a">A</span>
    <span class="ime-p">•,</span>
    <svg width="17" height="17" viewBox="0 0 17 17"><circle cx="8.500" cy="8.500" r="7.500" fill="none" stroke="#1a5fa8" stroke-width="1.500"/><path d="M6 5.500v2M11 5.500v2" stroke="#1a5fa8" stroke-width="1.500"/><path d="M4.500 10c2 3 6 3 8 0" fill="none" stroke="#1a5fa8" stroke-width="1.500"/></svg>
    <svg width="14" height="20" viewBox="0 0 14 20"><rect x="4" y="1" width="6" height="12" rx="3" fill="#1a5fa8"/><path d="M1 9c0 7 12 7 12 0M7 15v4M3 19h8" fill="none" stroke="#1a5fa8" stroke-width="1.300"/></svg>
    <svg width="18" height="14" viewBox="0 0 18 14"><rect width="18" height="14" rx="1.500" fill="#1a5fa8"/><path d="M3 4h12M3 7h12M5 10.500h8" stroke="#fff" stroke-dasharray="1.500 1" stroke-width="1.300"/></svg>
    <svg width="18" height="20" viewBox="0 0 18 20"><circle cx="7" cy="4" r="3.500" fill="#b9c4cf"/><path d="M1 14c0-5 3-6 6-6s5 1 5 3H7v5H1z" fill="#b9c4cf"/><rect x="7" y="12" width="11" height="7" rx="1" fill="#b9c4cf"/></svg>
    <svg width="17" height="17" viewBox="0 0 17 17"><path d="M5 1l3.500 1L12 1l5 3-2 4-2-1v10H4V7L2 8 0 4z" fill="#1a5fa8"/></svg>
    <svg width="17" height="17" viewBox="0 0 17 17"><path d="M16 4l-3 3-3-1-1-3 3-3c-3-.5-6 2-5 5.500L1 11c-1.500 1.500.5 4 2 3l6-6c3 1 7-1 7-4z" fill="#1a5fa8"/></svg>
</div>

<!-- red marks drawn on the screenshot -->
<div class="mark mark-a"></div>
<div class="mark mark-b"></div>
<div class="mark mark-c"></div>
</body>
</html>
```

FILE: styles.css
```css
* {
    margin: 0;
    padding: 0;
    box-sizing: border-box;
}

html, body {
    width: 1366px;
    height: 768px;
    overflow: hidden;
}

body {
    display: flex;
    flex-direction: column;
    position: relative;
    background-color: #f0f0f0;
    color: #111;
    font-family: "Noto Sans CJK SC", "Liberation Sans", sans-serif;
    font-size: 12px;
    line-height: 16px;
}

.defs { position: absolute; }

.ic { width: 16px; height: 16px; flex: none; }
.ib { width: 12px; height: 12px; flex: none; }

.lat {
    font-family: "Liberation Mono", monospace;
    font-size: 10px;
}

.arrow {
    display: inline-block;
    flex: none;
    width: 0;
    height: 0;
    border: 3px solid transparent;
    border-top: 3px solid #222;
    border-bottom: 0;
    margin-left: 3px;
}

.chev { font-size: 12px; font-weight: bold; color: #222; line-height: 12px; }

.sep { flex: none; width: 1px; height: 20px; background-color: #bbb; }

/* title */
.titlebar {
    height: 23px;
    flex: none;
    display: flex;
    align-items: center;
    background-color: #fff;
    padding-left: 3px;
}

.logo { width: 15px; height: 15px; margin-right: 5px; }
.title-text { color: #808080; font-size: 12.600px; white-space: nowrap; }

.winbtns {
    margin-left: auto;
    display: flex;
    gap: 33px;
    padding-right: 20px;
}

/* menu */
.menubar {
    height: 30px;
    flex: none;
    display: flex;
    align-items: center;
    gap: 10.700px;
    padding-left: 7px;
    background-color: #f6f6f6;
    white-space: nowrap;
}

.m-ver { margin-left: 0; }
.m-link { display: flex; align-items: center; gap: 4px; margin-left: 0; }
.m-link + .m-link { margin-left: 8px; gap: 1px; }

.m-ask {
    position: absolute;
    left: 935px;
    top: 23px;
    width: 188px;
    height: 30px;
    padding: 7px 0 0 31px;
    background-color: #fff;
    color: #5a3200;
}

.m-user {
    position: absolute;
    left: 1126px;
    top: 23px;
    right: 0;
    height: 30px;
    display: flex;
    align-items: center;
    padding-left: 4px;
    background-color: #f6f6f6;
}

.u-phone { margin-left: 4px; font-family: "Liberation Sans", sans-serif; font-size: 12.800px; }
.m-user .arrow { margin-left: 6px; margin-right: 8px; }
.u-bell { width: 14px; height: 18px; margin-left: 8px; }
.m-user .chev { margin-left: 43px; margin-top: -10px; }

/* toolbars */
.toolbar {
    margin-top: 1px;
    margin-bottom: 3px;
    height: 27px;
    flex: none;
    display: flex;
    align-items: center;
    gap: 8px;
    background: linear-gradient(#fbfbfb, #ededed);
    white-space: nowrap;
}

.tb-left {
    width: 151px;
    display: flex;
    align-items: center;
    gap: 4px;
    padding-left: 4px;
    height: 100%;
}

.tb-left .ic + .arrow { margin-right: 5px; margin-left: 4px; }
.tb-left .sep { margin: 0 2px 0 2px; }
.tb-left .chev { margin-left: 19px; margin-top: -8px; }

.tool {
    display: flex;
    align-items: center;
    gap: 3px;
    flex: none;
}

.off { color: #8a8a8a; }
.t-first { margin-left: -2px; }
.t-sum { margin-left: 2px; }

.sigma {
    width: 15px;
    font-family: "Liberation Serif", serif;
    font-size: 14px;
    font-weight: bold;
    text-align: center;
}

.c-mid { margin-left: 31px; margin-right: 2px; margin-top: -8px; }

.combo2 {
    width: 62px;
    height: 24px;
    margin-right: -5px;
    display: flex;
    align-items: center;
    gap: 3px;
    padding-left: 3px;
    border: 1px solid #777;
    color: #8a8a8a;
}

.combo2 .arrow { margin-left: 6px; border-top-color: #777; }
.sq { width: 14px; height: 14px; background-color: #ddd; border: 1px solid #bbb; }
.a-gap { margin-left: 5px; border-top-color: #888; }
.tool .arrow { border-top-color: currentColor; }
.t-tight { margin-left: -2px; }
.s-tall { margin-right: -3px; }
.c-end { margin-left: auto; margin-right: 2px; margin-top: -8px; }

/* main area */
.main {
    height: 624px;
    flex: none;
    display: flex;
    gap: 7px;
}

.nav {
    width: 165px;
    flex: none;
    display: flex;
    flex-direction: column;
}

.nav-head {
    height: 15px;
    flex: none;
    display: flex;
    align-items: center;
    background-color: #e8e8e8;
    border: 1px solid #999;
    font-size: 12.500px;
}

.nav-pin { margin-left: auto; }
.nav-x { margin: 0 3px 0 8px; font-size: 13px; color: #444; }

.nav-btn {
    height: 22px;
    flex: none;
    display: flex;
    align-items: center;
    justify-content: center;
    background-color: #f0f0f0;
    border: 1px solid #aaa;
    margin-top: -1px;
    font-size: 12px;
}

.nb-first { margin-top: 2px; }
.nb-low { margin-top: 2px; }

.nav-tool {
    height: 26px;
    flex: none;
    margin: 2px 2px 0;
    display: flex;
    align-items: center;
    gap: 6px;
    padding-left: 3px;
    background: linear-gradient(#fff, #f0f0f0);
    border: 1px solid #ddd;
}

.nav-tree {
    height: 487px;
    flex: none;
    margin: 0 2px;
    position: relative;
    background-color: #f0f0f0;
    border: 1px solid #999;
    overflow: hidden;
}

.nav-list {
    height: 469px;
    background-color: #fff;
    overflow: hidden;
    padding-top: 1px;
}

.row {
    height: 16px;
    display: flex;
    align-items: center;
    white-space: nowrap;
    font-size: 12px;
}

.kid {
    padding-left: 40px;
    background:
        repeating-linear-gradient(to bottom, #666 0 1px, transparent 1px 3px) 12px 0 / 1px 100% no-repeat,
        repeating-linear-gradient(to bottom, #666 0 1px, transparent 1px 3px) 31px 0 / 1px 100% no-repeat,
        repeating-linear-gradient(to right, #666 0 1px, transparent 1px 3px) 31px 8px / 11px 1px no-repeat;
}

.kid.last {
    background:
        repeating-linear-gradient(to bottom, #666 0 1px, transparent 1px 3px) 12px 0 / 1px 100% no-repeat,
        repeating-linear-gradient(to bottom, #666 0 1px, transparent 1px 3px) 31px 0 / 1px 8px no-repeat,
        repeating-linear-gradient(to right, #666 0 1px, transparent 1px 3px) 31px 8px / 11px 1px no-repeat;
}

.item {
    height: 16px;
    display: flex;
    align-items: center;
    gap: 4px;
    padding: 0 2px 0 3px;
}

.item .lat { margin-left: -3px; }
.picked { background-color: #d9d9d9; }

.group { padding-left: 6px; }
.gt { width: 10px; height: 10px; flex: none; margin-right: 7px; }
.group .ic { margin-right: 5px; }

.vbar {
    position: absolute;
    background-color: #fff;
    width: 17px;
    display: flex;
    flex-direction: column;
    align-items: center;
}

.vbar .thumb, .hbar .thumb { position: absolute; background-color: #c8c8c8; }

.up, .down, .left, .right {
    display: block;
    width: 8px;
    height: 8px;
    border-left: 2px solid #555;
    border-top: 2px solid #555;
}

.up { transform: rotate(45deg); margin-top: 5px; }
.down { transform: rotate(225deg); }
.left { transform: rotate(-45deg); }
.right { transform: rotate(135deg); }

.hbar {
    position: absolute;
    display: flex;
    align-items: center;
    justify-content: space-between;
    height: 15px;
    padding: 0 10px;
    background-color: #f0f0f0;
}

.nav-v { right: 0; top: 0; height: 469px; }
.nav-v .thumb { top: 47px; height: 293px; width: 16px; }
.nav-v .down { position: absolute; bottom: 6px; }

.nav-h { left: 0; right: 0; bottom: 1px; }
.nav-h .thumb { left: 18px; width: 102px; height: 15px; }

.work {
    flex: 1;
    display: flex;
    flex-direction: column;
    min-width: 0;
}

.toolbar3 {
    height: 26px;
    flex: none;
    display: flex;
    align-items: center;
    gap: 7px;
    padding-left: 3px;
    background: linear-gradient(#fbfbfb, #eee);
    white-space: nowrap;
}

.toolbar3 .sep { margin: 0 -1px; }
.floor { margin-left: -4px; }

.floor-box {
    width: 62px;
    height: 23px;
    margin-left: -3px;
    display: flex;
    align-items: center;
    justify-content: space-between;
    padding: 0 4px;
    background-color: #fff;
}

.t-filter { margin-left: -1px; }
.toolbar3 .s-copy { margin-left: -6px; }
.t-plain { margin-left: 3px; margin-right: 6px; }
.t-up { margin-left: -7px; }

.panes { flex: 1; display: flex; gap: 8px; min-height: 0; }

.comp { width: 182px; flex: none; display: flex; flex-direction: column; }

.comp-search { height: 33px; flex: none; display: flex; padding-top: 7px; }

.search-input {
    width: 156px;
    height: 24px;
    padding: 3px 4px;
    background-color: #fff;
    border: 1px solid #999;
    color: #888;
}

.search-btn { width: 16px; height: 16px; margin: 5px 0 0 6px; }

.comp-frame {
    height: 561px;
    flex: none;
    position: relative;
    border: 2px solid #999;
    border-top-width: 1px;
    background-color: #f0f0f0;
    overflow: hidden;
}

.comp-list { height: 544px; background-color: #fff; overflow: hidden; padding-top: 1px; }

.k-root {
    height: 16px;
    display: flex;
    align-items: center;
    padding-left: 4px;
    font-size: 12px;
}

.k-root .gt { margin-right: 5px; }
.k-root .ic { margin-right: 7px; }

.k {
    height: 16px;
    padding-left: 38px;
    background:
        repeating-linear-gradient(to bottom, #666 0 1px, transparent 1px 3px) 29px 0 / 1px 100% no-repeat,
        repeating-linear-gradient(to right, #666 0 1px, transparent 1px 3px) 29px 8px / 9px 1px no-repeat;
    font-family: "Liberation Mono", monospace;
    font-size: 10px;
    white-space: nowrap;
    overflow: hidden;
}

.k-in {
    display: inline-flex;
    height: 16px;
    align-items: center;
    gap: 8px;
    padding: 0 5px 0 3px;
}

.k .cjk { font-family: "Noto Sans CJK SC", sans-serif; font-size: 12px; }
.selected .k-in { background-color: #316ac5; color: #fff; }

.comp-v { right: 0; top: 0; height: 544px; background-color: #fff; }
.comp-v .thumb { top: 18px; height: 193px; width: 15px; }
.comp-v .down { position: absolute; bottom: 6px; }

.comp-h { left: 0; right: 0; bottom: 0; height: 16px; }
.comp-h .thumb { left: 16px; width: 92px; height: 16px; }

.props { flex: 1; margin-right: 5px; display: flex; flex-direction: column; min-width: 0; }

.prop-tabs {
    height: 21px;
    flex: none;
    margin-top: 2px;
    border-bottom: 1px solid #ccc;
}

.prop-tab {
    width: 60px;
    height: 21px;
    padding: 1px 0 0 3px;
    background-color: #fff;
    border: 1px solid #ddd;
    border-bottom: 0;
    font-size: 12px;
}

.prop-body {
    flex: 1;
    margin: 4px 0 6px;
    display: flex;
    justify-content: space-between;
    background-color: #fff;
    border: 1px solid #aaa;
    border-bottom-width: 2px;
}

.grid { border-collapse: collapse; table-layout: fixed; width: 500px; height: 0; }

.grid tr { height: 19px; }

.grid td, .grid th {
    height: 19px;
    padding-top: 0;
    padding-bottom: 0;
    line-height: 14px;
    border: 1px solid #bbb;
    font-weight: normal;
    white-space: nowrap;
    overflow: hidden;
    vertical-align: middle;
}

.grid .n {
    width: 21px;
    background: linear-gradient(#fafafa, #e6e6e6);
    text-align: center;
    font-family: "Liberation Mono", monospace;
    font-size: 11px;
    border-left: 0;
}

.grid .name { width: 191px; padding-left: 20px; font-size: 12px; }
.grid .val { width: 288px; padding-left: 2px; }

.grid .g-head { height: 22px; }
.g-head th { height: 22px; background: linear-gradient(#fafafa, #ebebeb); }
.g-head .name { padding-left: 0; font-size: 12px; }
.g-head .val { background: linear-gradient(#fbdfa8, #f2bd63); }

.grid .blue { color: #0000e0; }
.dim { color: #8a8a8a; }
.small { font-size: 11px; }
.grid .lat-v { font-family: "Liberation Mono", monospace; font-size: 11.500px; }

.on .n { background: linear-gradient(#fbd9a5, #f8c98a); color: #7a1e8a; }
.on .name { background-color: #0078d7; color: #fff; }
.on .val { background-color: #cfe4f7; }

.grid .name:has(.plus) { padding-left: 2px; }

.plus {
    display: inline-block;
    width: 13px;
    height: 13px;
    margin-right: 5px;
    vertical-align: top;
    border: 1px solid #aaa;
    background:
        linear-gradient(#111, #111) center / 7px 1px no-repeat,
        linear-gradient(#111, #111) center / 1px 7px no-repeat;
}

.prop-scroll {
    width: 17px;
    display: flex;
    flex-direction: column;
    justify-content: flex-end;
    align-items: center;
    padding-bottom: 8px;
    background-color: #f4f4f4;
}

/* status */
.statusbar {
    height: 20px;
    flex: none;
    display: flex;
    gap: 3px;
    background-color: #f0f0f0;
}

.s-cell {
    padding: 2px 2px 0;
    background: linear-gradient(#fbfbfb, #f0f0f0);
    border: 1px solid #ddd;
    white-space: nowrap;
    overflow: hidden;
}

.s1 { width: 147px; }
.s2 { width: 77px; }
.s3 { width: 97px; }
.s4 { width: 47px; }
.s5 { flex: 1; }
.s6 { width: 71px; }

/* taskbar */
.taskbar {
    height: 40px;
    flex: none;
    display: flex;
    background-color: #0a1419;
    color: #fff;
}

.start {
    width: 48px;
    display: flex;
    align-items: center;
    justify-content: center;
    background-color: #000;
}

.search {
    width: 344px;
    display: flex;
    align-items: center;
    background-color: #333;
    padding-left: 10px;
}

.ring {
    width: 21px;
    height: 21px;
    flex: none;
    border: 3px solid #ddd;
    border-radius: 50%;
}

.s-hint { margin-left: 5px; color: #8c8c8c; font-size: 14px; }
.mic { margin-left: auto; margin-right: 15px; }

.apps { display: flex; }

.app {
    flex: none;
    width: 50px;
    height: 40px;
    display: flex;
    align-items: center;
    justify-content: center;
}

.a-ie { margin-left: 2px; }
.a-edge { margin-left: 5px; }
.a-ie2 { margin-left: -2px; }
.a-folder { margin-left: -2px; }

.on-line { width: 40px; box-shadow: inset 0 -2px 0 #76b9ed; }
.a-glodon { margin-left: 4px; }
.a-green { margin-left: 9px; }
.active { width: 48px; margin-left: 5px; background-color: #2b3338; }
.a-note { margin-left: 5px; }

.tray {
    margin-left: auto;
    display: flex;
    align-items: center;
    gap: 9px;
    padding-right: 19px;
    color: #ddd;
    position: relative;
}

.t-link { margin-right: 12px; font-size: 12px; }

.t-cpu, .t-clock {
    display: flex;
    flex-direction: column;
    align-items: center;
    line-height: 20px;
    font-size: 12px;
}

.t-cpu { margin-right: 10px; }
.t-wifi { margin-right: -4px; }
.t-a { margin-right: 3px; font-family: "Liberation Sans", sans-serif; font-size: 19px; color: #fff; }
.t-clock { margin: 0 8px 0 18px; font-family: "Liberation Sans", sans-serif; font-size: 13px; }

.t-note { position: relative; width: 22px; height: 30px; padding-top: 5px; }

.badge {
    position: absolute;
    left: 6px;
    top: 13px;
    width: 17px;
    height: 17px;
    border-radius: 50%;
    background-color: #444;
    border: 1px solid #999;
    color: #fff;
    font: bold 12px/15px "Liberation Sans", sans-serif;
    text-align: center;
}

/* dialog */
.dialog {
    position: absolute;
    left: 641px;
    top: 107px;
    width: 725px;
    height: 570px;
    display: flex;
    flex-direction: column;
    background-color: #c8ddf0;
    border: 1px solid #444;
    border-right: 0;
}

.dlg-title {
    height: 29px;
    flex: none;
    padding: 10px 0 0 8px;
    background: linear-gradient(#9ab6d3, #bdd2e8);
    font-size: 12px;
}

.dlg-body {
    height: 532px;
    flex: none;
    margin-left: 7px;
    padding: 5px 0 0 5px;
    background-color: #f0f0f0;
    border-top: 1px solid #ddd;
    display: flex;
    flex-direction: column;
}

.dlg-bar {
    flex: none;
    display: flex;
    align-items: center;
    gap: 10px;
    padding-left: 12px;
    white-space: nowrap;
    position: relative;
}

.dlg-bar span { flex: none; }
.b1 { height: 27px; background: linear-gradient(#fafafa, #eee); }
.b2 { height: 26px; margin-top: 1px; background: linear-gradient(#fafafa, #eee); }
.b3 { height: 29px; margin-top: 1px; gap: 1px; padding-left: 11px; }

.grip {
    position: absolute;
    left: 4px;
    top: 6px;
    width: 2px;
    height: 16px;
    background: repeating-linear-gradient(#aaa 0 2px, transparent 2px 4px);
}

.gray { color: #999; }
.b1 .sep { margin: 0 -2px; }

.pressed { padding: 4px; border: 1px solid #0078d7; }
.p1 { height: 25px; margin: 2px -5px 0 -5px; }
.p2 { margin-left: -5px; padding: 3px 4px; background-color: #dbe8f3; }

.dlg-combo {
    width: 135px;
    height: 25px;
    display: flex;
    justify-content: space-between;
    align-items: center;
    padding-left: 3px;
    background-color: #fff;
    border: 1px solid #0078d7;
    font-family: "Liberation Sans", sans-serif;
    font-size: 13px;
}

.dlg-combo em {
    width: 13px;
    height: 23px;
    display: flex;
    align-items: center;
    justify-content: center;
    background-color: #dbe8f3;
}

.dlg-combo .arrow { margin-left: 0; }

.canvas {
    height: 414px;
    flex: none;
    background-color: #000;
    border: 2px solid #f00;
    border-right: 0;
    overflow: hidden;
}

.canvas svg { display: block; }

.dim-g { font-family: "Liberation Serif", serif; font-size: 22px; fill: #0f0; letter-spacing: .5px; }
.dim-w { font-family: "Liberation Serif", serif; font-size: 20px; fill: #fff; }

.dlg-status {
    height: 20px;
    flex: none;
    margin: 8px 0 0 -5px;
    display: flex;
    gap: 2px;
}

.dlg-status div {
    padding: 2px 3px;
    background: linear-gradient(#fbfbfb, #f0f0f0);
    border: 1px solid #ddd;
    white-space: nowrap;
}

.ds1 { width: 148px; padding-left: 7px; font-family: "Liberation Mono", monospace; font-size: 10px; }
.ds2 { flex: 1; }

/* ime */
.ime {
    position: absolute;
    left: 753px;
    top: 14px;
    width: 190px;
    height: 24px;
    display: flex;
    align-items: center;
    gap: 5px;
    padding-left: 16px;
    background-color: #f4f8fc;
    border: 1px solid #b5c8da;
    color: #1a5fa8;
}

.ime-s { position: absolute; left: -17px; top: -3px; width: 28px; height: 28px; }
.ime-a { font-family: "Liberation Sans", sans-serif; font-size: 19px; }
.ime-p { width: 17px; margin-left: 2px; font: bold 13px/12px "Liberation Sans", sans-serif; }

/* red boxes */
.mark { position: absolute; border: 4px solid #f00; }
.mark-a { left: 719px; top: 124px; width: 127px; height: 44px; }
.mark-b { left: 818px; top: 165px; width: 101px; height: 40px; }
.mark-c { left: 545px; top: 190px; width: 85px; height: 32px; }
```
